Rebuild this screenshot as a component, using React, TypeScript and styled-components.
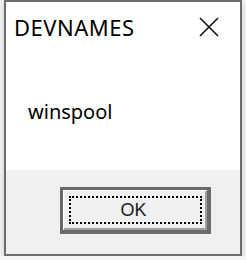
import React from "react";
import { styled, createGlobalStyle } from "styled-components";

const GlobalStyle = createGlobalStyle`
  html, body {
    margin: 0;
    padding: 0;
    background: #f4f4f4;
  }
`;

const Window = styled.div`
  box-sizing: border-box;
  width: 238px;
  height: 256px;
  margin-left: 4px;
  border: 2px solid #6d6d6d;
  display: flex;
  flex-direction: column;
  background: #f0f0f0;
  box-shadow: 0 2px 6px rgba(0, 0, 0, 0.18);
  font-family: "Noto Sans", "Open Sans", sans-serif;
`;

const Body = styled.div`
  height: 168px;
  background: #ffffff;
  display: flex;
  flex-direction: column;
`;

const TitleBar = styled.div`
  display: flex;
  align-items: center;
  justify-content: space-between;
  margin-top: 11px;
  padding: 0 20px 0 8px;
  height: 28px;
`;

const Title = styled.span`
  font-size: 22px;
  line-height: 28px;
  color: #000;
  letter-spacing: 0.5px;
`;

const CloseButton = styled.div`
  width: 22px;
  height: 22px;
  display: flex;
  align-items: center;
  justify-content: center;
`;

const Message = styled.div`
  margin-top: 59px;
  padding-left: 22px;
  font-size: 20px;
  line-height: 24px;
  color: #000;
`;

const Footer = styled.div`
  flex: 1;
  display: flex;
  justify-content: flex-end;
  align-items: flex-start;
  padding: 17px 29px 0 0;
`;

const Button = styled.button`
  box-sizing: border-box;
  width: 151px;
  height: 47px;
  background: #f0f0f0;
  border-style: solid;
  border-color: #6a6a6a;
  border-width: 3px 4px 4px 3px;
  box-shadow: inset 1px 1px 0 #ffffff, inset -2px -2px 0 #a0a0a0;
  display: flex;
  align-items: stretch;
  justify-content: stretch;
  padding: 6px 5px 6px 6px;
`;

const FocusRing = styled.span`
  flex: 1;
  border: 2px dotted #000;
  display: flex;
  align-items: center;
  justify-content: center;
  font-family: "Liberation Sans", Arial, sans-serif;
  font-size: 18px;
  color: #1a1a1a;
  padding-right: 4px;
`;

export default function App() {
  return (
    <>
      <GlobalStyle />
      <Window>
        <Body>
          <TitleBar>
            <Title>DEVNAMES</Title>
            <CloseButton>
              <svg width="20" height="20" viewBox="0 0 20 20">
                <path d="M1 1 L19 19 M19 1 L1 19" stroke="#111" strokeWidth="1.6" fill="none" />
              </svg>
            </CloseButton>
          </TitleBar>
          <Message>winspool</Message>
        </Body>
        <Footer>
          <Button>
            <FocusRing>OK</FocusRing>
          </Button>
        </Footer>
      </Window>
    </>
  );
}
